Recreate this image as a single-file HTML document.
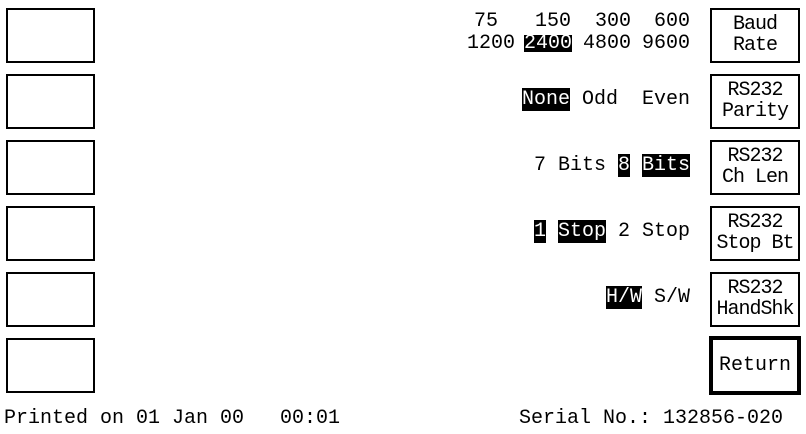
<!DOCTYPE html><html><head><style>
body{margin:0;width:806px;height:434px;background:#fff;position:relative;overflow:hidden;font-family:"Liberation Mono",monospace;font-size:20px;color:#000}
.b{position:absolute;border:2px solid #000;box-sizing:border-box}
.l{left:6px;width:89px;height:55px}
.r{left:710px;width:90px;height:55px;text-align:center;line-height:21px;padding-top:4px;letter-spacing:-1px}
.t{position:absolute;white-space:pre;line-height:20px}
.inv{background:#000;color:#fff}
</style></head><body>
<div class="b l" style="top:8px"></div>
<div class="b l" style="top:74px"></div>
<div class="b l" style="top:140px"></div>
<div class="b l" style="top:206px"></div>
<div class="b l" style="top:272px"></div>
<div class="b l" style="top:338px"></div>

<div class="b r" style="top:8px">Baud<br>Rate</div>
<div class="b r" style="top:74px">RS232<br>Parity</div>
<div class="b r" style="top:140px">RS232<br>Ch Len</div>
<div class="b r" style="top:206px">RS232<br>Stop Bt</div>
<div class="b r" style="top:272px">RS232<br>HandShk</div>
<div class="b" style="left:709px;top:336px;width:92px;height:59px;border-width:4px;text-align:center;line-height:51px">Return</div>

<div class="t" style="right:308px;top:12px">75</div>
<div class="t" style="right:235px;top:12px">150</div>
<div class="t" style="right:175px;top:12px">300</div>
<div class="t" style="right:116px;top:12px">600</div>
<div class="t" style="right:291px;top:34px">1200</div>
<div class="t inv" style="right:234px;top:35px;line-height:17px">2400</div>
<div class="t" style="right:175px;top:34px">4800</div>
<div class="t" style="right:116px;top:34px">9600</div>

<div class="t" style="right:116px;top:90px"><span class="inv">None</span> Odd  Even</div>
<div class="t" style="right:116px;top:156px">7 Bits <span class="inv">8</span> <span class="inv">Bits</span></div>
<div class="t" style="right:116px;top:222px"><span class="inv">1</span> <span class="inv">Stop</span> 2 Stop</div>
<div class="t" style="right:116px;top:288px"><span class="inv">H/W</span> S/W</div>

<div class="t" style="left:4px;top:409px">Printed on 01 Jan 00   00:01</div>
<div class="t" style="left:519px;top:409px">Serial No.: 132856-020</div>
</body></html>
